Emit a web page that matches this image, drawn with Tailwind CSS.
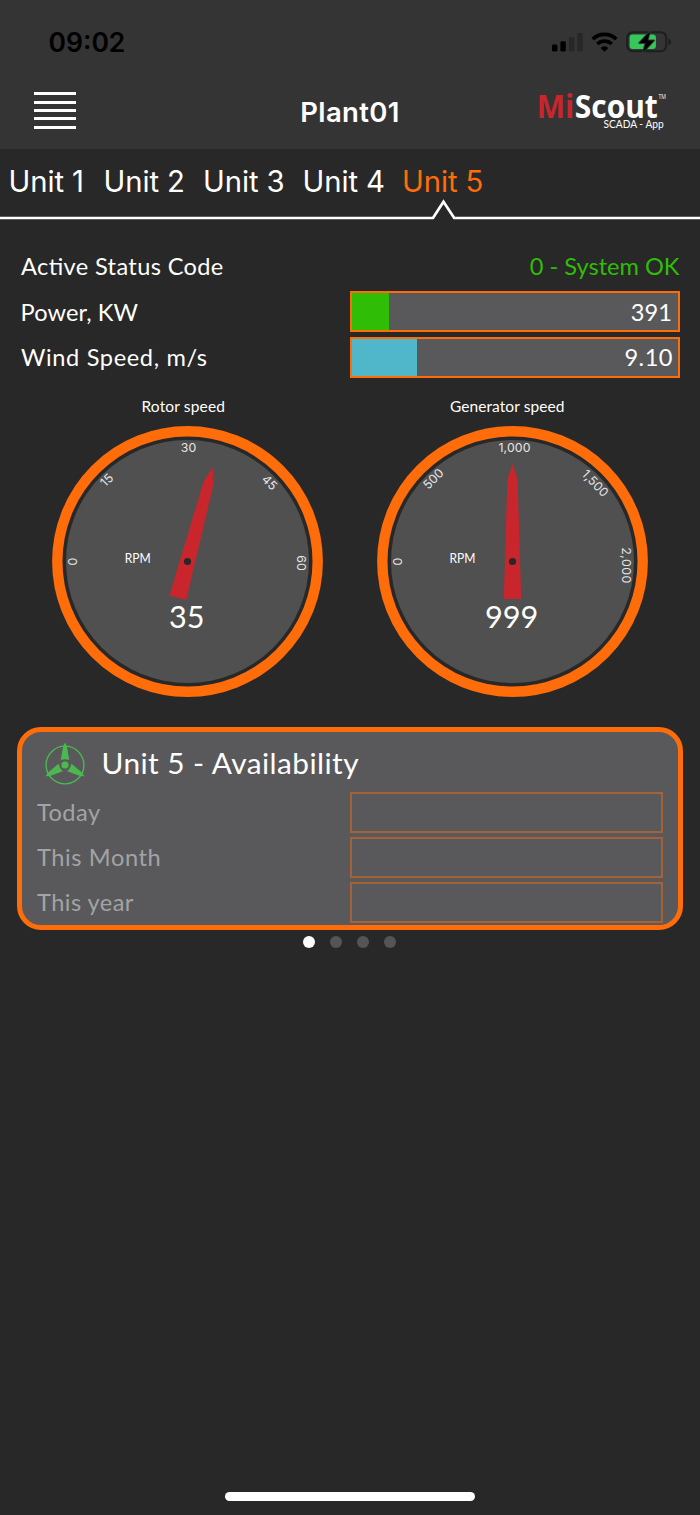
<!DOCTYPE html>
<html lang="en">
<head>
<meta charset="utf-8">
<title>MiScout SCADA</title>
<script src="https://cdn.jsdelivr.net/npm/@tailwindcss/browser@4"></script>
</head>
<body class="bg-[#282828] text-white font-['Lato','Open_Sans',sans-serif]">
<div class="w-[700px] h-[1515px] flex flex-col overflow-hidden">

  <header class="h-[149px] bg-[#343434] pt-[10px] shrink-0">
    <div class="h-16 flex items-center justify-between pl-[48.500px] pr-[28px] text-black">
      <span class="font-['Inter',sans-serif] font-semibold text-[26.5px] leading-none">09:02</span>
      <svg width="122" height="24" viewBox="0 0 122 24">
        <!-- signal -->
        <rect x="2" y="14.6" width="5.4" height="7" rx="1.4"/>
        <rect x="10.4" y="11.2" width="5.4" height="10.4" rx="1.4"/>
        <rect x="19" y="7.2" width="5.4" height="14.4" rx="1.4" fill="#272727"/>
        <rect x="27.4" y="3" width="5.4" height="18.6" rx="1.4" fill="#272727"/>
        <!-- wifi -->
        <g fill="none" stroke="#000" stroke-width="3.700">
          <path d="M42.700 9.100 A17 17 0 0 1 66.300 9.100"/>
          <path d="M47.300 14.000 A10.300 10.300 0 0 1 61.700 14.000"/>
        </g>
        <path d="M54.500 21.800 L50.600 17.900 A5.600 5.600 0 0 1 58.400 17.900 Z"/>
        <!-- battery -->
        <rect x="77.200" y="2.200" width="39" height="19" rx="5.500" fill="none" stroke="#1e1e1e" stroke-width="2"/>
        <path d="M118.400 8.200 Q121.200 9.400 121.200 11.800 Q121.200 14.200 118.400 15.400 Z" fill="#1e1e1e"/>
        <rect x="79.600" y="4.600" width="26.300" height="14.300" rx="3" fill="#35c759"/>
        <path d="M99.800 1.800 L89.300 13 H95.600 L93.200 22 L104 10.400 H97.500 Z" fill="#000" stroke="#343434" stroke-width="2" paint-order="stroke" stroke-linejoin="round"/>
      </svg>
    </div>
    <div class="h-[75px] grid grid-cols-3 items-center">
      <div class="ml-[33.500px] w-[42px] mt-[-2px] flex flex-col gap-[5.400px]">
        <div class="h-[3px] bg-white"></div><div class="h-[3px] bg-white"></div><div class="h-[3px] bg-white"></div><div class="h-[3px] bg-white"></div><div class="h-[3px] bg-white"></div>
      </div>
      <h1 class="text-center font-['Inter',sans-serif] font-semibold text-[27.5px] leading-none tracking-[0.350px] pt-[2px]">Plant01</h1>
      <svg class="justify-self-end mr-[30px] overflow-visible" width="136" height="44" viewBox="534 90 136 44" font-family="Open Sans, sans-serif">
        <text x="536.700" y="117.500" font-size="31.500" font-weight="700" fill="#c9252c" textLength="37.500" lengthAdjust="spacingAndGlyphs">Mi</text>
        <text x="574.800" y="117.500" font-size="31.500" font-weight="700" fill="#fff" textLength="83" lengthAdjust="spacingAndGlyphs">Scout</text>
        <text x="658.500" y="98.800" font-size="6.500" fill="#fff" textLength="7.500" lengthAdjust="spacingAndGlyphs">TM</text>
        <text x="603.600" y="127.800" font-size="11" fill="#fff" font-family="Lato, sans-serif" textLength="60" lengthAdjust="spacingAndGlyphs">SCADA - App</text>
      </svg>
    </div>
  </header>

  <nav class="h-[71px] shrink-0 relative font-['Inter',sans-serif] text-[29.300px] tracking-[-0.100px]">
    <div class="flex h-[65px] items-center pl-[8.500px] leading-none">
      <a class="w-[95px]">Unit 1</a><a class="w-[99.500px]">Unit 2</a><a class="w-[99.500px]">Unit 3</a><a class="w-[99.500px]">Unit 4</a><a class="text-[#ff6c0a]">Unit 5</a>
    </div>
    <svg class="absolute left-0 bottom-0" width="700" height="22" viewBox="0 198 700 22">
      <path d="M0 218 H433 L443.500 201.700 L454.200 218 H700" fill="none" stroke="#fff" stroke-width="2.700" stroke-miterlimit="8"/>
    </svg>
  </nav>

  <section class="mt-[23px] pl-[21px] pr-[20.500px] text-[23.600px] leading-none">
    <div class="h-[45.600px] pt-[1px] flex items-center justify-between">
      <span class="tracking-[0.360px] [font-feature-settings:'liga']">Active Status Code</span>
      <span class="text-[#2fbd06]">0 - System OK</span>
    </div>
    <div class="h-[45.600px] pt-[1px] flex items-center justify-between">
      <span class="tracking-[0.100px] ml-[-0.500px] pt-[1px]">Power, KW</span>
      <div class="w-[329.500px] h-[41px] border-2 border-[#ff6c0a] bg-[#59595b] flex items-center">
        <div class="w-[37px] h-full bg-[#2fbd06]"></div>
        <span class="ml-auto pr-[5.500px] pt-[1px] tracking-[0.100px]">391</span>
      </div>
    </div>
    <div class="h-[45.600px] pt-[1px] flex items-center justify-between">
      <span class="tracking-[0.640px]">Wind Speed, m/s</span>
      <div class="w-[329.500px] h-[41px] border-2 border-[#ff6c0a] bg-[#59595b] flex items-center">
        <div class="w-[64.500px] h-full bg-[#50b7ca]"></div>
        <span class="ml-auto pr-[4.500px] tracking-[0.500px]">9.10</span>
      </div>
    </div>
  </section>

  <section class="grid grid-cols-[324.400px_324.400px] pl-[25.600px] shrink-0">
    <div class="flex flex-col items-center">
      <h2 class="h-[46px] pt-[7px] pr-[9px] flex items-center text-[15.500px] leading-none tracking-[0.150px]">Rotor speed</h2>
      <svg width="271" height="271" viewBox="-135.500 -135.500 271 271" fill="#fff" font-family="Lato, sans-serif">
        <circle r="130.200" fill="#282828" stroke="#ff6c0a" stroke-width="10.400"/>
        <circle r="121.500" fill="#505050"/>
        <g font-family="Inter, sans-serif" font-size="12.300" fill="#e6e6e6" text-anchor="middle" letter-spacing="0.100">
          <text transform="translate(-115 0) rotate(-90)" y="4.400">0</text>
          <text transform="translate(-80.800 -81.500) rotate(-45)" y="4.400">15</text>
          <text transform="translate(1 -113.800)" y="4.400">30</text>
          <text transform="translate(82.200 -79) rotate(45)" y="4.400">45</text>
          <text transform="translate(114.300 1.500) rotate(90)" y="4.400">60</text>
        </g>
        <text x="-62.800" y="1.800" font-size="13" textLength="26" lengthAdjust="spacingAndGlyphs">RPM</text>
        <path transform="rotate(15)" d="M0 -97.500 L5.100 -82 L8.700 37.500 H-8.700 L-5.100 -82 Z" fill="#c9252c"/>
        <circle r="3.600" fill="#282828"/>
        <text x="-18.600" y="66.800" font-size="31.500" textLength="35.500" lengthAdjust="spacingAndGlyphs">35</text>
      </svg>
    </div>
    <div class="flex flex-col items-center">
      <h2 class="h-[46px] pt-[7px] pr-[10px] flex items-center text-[15.500px] leading-none tracking-[0.080px]">Generator speed</h2>
      <svg width="271" height="271" viewBox="-135.500 -135.500 271 271" fill="#fff" font-family="Lato, sans-serif">
        <circle r="130.200" fill="#282828" stroke="#ff6c0a" stroke-width="10.400"/>
        <circle r="121.500" fill="#505050"/>
        <g font-family="Inter, sans-serif" font-size="12.300" fill="#e6e6e6" text-anchor="middle" letter-spacing="0.100">
          <text transform="translate(-115 0) rotate(-90)" y="4.400">0</text>
          <text transform="translate(-79.200 -82.800) rotate(-45)" y="4.400">500</text>
          <text transform="translate(2 -113.800)" y="4.400">1,000</text>
          <text transform="translate(82.700 -78.300) rotate(46)" y="4.400">1,500</text>
          <text transform="translate(113.500 4) rotate(90)" y="4.400" letter-spacing="0.500">2,000</text>
        </g>
        <text x="-63" y="1.800" font-size="13" textLength="26" lengthAdjust="spacingAndGlyphs">RPM</text>
        <path d="M0 -97.500 L5.100 -82 L8.700 37.500 H-8.700 L-5.100 -82 Z" fill="#c9252c"/>
        <circle r="3.600" fill="#282828"/>
        <text x="-27.600" y="66.800" font-size="31.500" textLength="53.500" lengthAdjust="spacingAndGlyphs">999</text>
      </svg>
    </div>
  </section>

  <section class="mt-[30px] ml-[17px] w-[666px] h-[203px] shrink-0 rounded-[24px] border-[5px] border-[#ff6c0a] bg-[#59595b] px-[15px] text-[23.600px] leading-none">
    <div class="h-[58px] pt-[4px] flex items-center pl-[7px]">
      <svg class="mt-[3px]" width="42" height="44" viewBox="-21 -23 42 44" fill="#4bb850">
        <circle r="18.900" fill="none" stroke="#4bb850" stroke-width="1.400"/>
        <path id="blade" d="M0 -22.500 L1.900 -18.500 L4.300 -5 Q0 -6.600 -4.300 -5 L-1.900 -18.500 Z"/>
        <use href="#blade" transform="rotate(120)"/>
        <use href="#blade" transform="rotate(240)"/>
        <circle r="3.600"/>
      </svg>
      <h2 class="ml-[15.500px] text-[29.800px] leading-none tracking-[0.450px]">Unit 5 - Availability</h2>
    </div>
    <div class="h-[45px] flex items-center justify-between text-[#a3a3a4]">
      <span class="pt-[1px] tracking-[0.450px]">Today</span><div class="w-[313px] h-[40.500px] border-2 border-[#a46239]"></div>
    </div>
    <div class="h-[45px] flex items-center justify-between text-[#a3a3a4]">
      <span class="pt-[1px] tracking-[0.600px]">This Month</span><div class="w-[313px] h-[40.500px] border-2 border-[#a46239]"></div>
    </div>
    <div class="h-[45px] flex items-center justify-between text-[#a3a3a4]">
      <span class="pt-[1px] tracking-[0.450px]">This year</span><div class="w-[313px] h-[40.500px] border-2 border-[#a46239]"></div>
    </div>
  </section>

  <div class="mt-[6px] pr-[1.500px] flex justify-center gap-[15px]">
    <div class="size-3 rounded-full bg-white"></div>
    <div class="size-3 rounded-full bg-[#555]"></div>
    <div class="size-3 rounded-full bg-[#555]"></div>
    <div class="size-3 rounded-full bg-[#555]"></div>
  </div>

  <div class="mt-auto mb-[14px] mx-auto w-[250px] h-[9px] rounded-full bg-white"></div>
</div>
</body>
</html>
